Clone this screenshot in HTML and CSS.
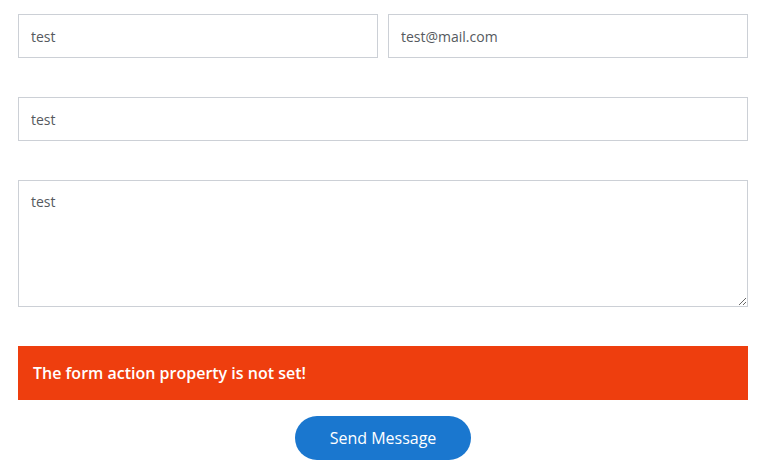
FILE: index.html
```html
<!DOCTYPE html>
<html>
<head>
<meta charset="utf-8">
<link rel="stylesheet" href="styles.css">
</head>
<body>
<form class="form">
  <div class="row two">
    <input class="field" type="text" value="test">
    <input class="field" type="email" value="test@mail.com">
  </div>
  <div class="row">
    <input class="field" type="text" value="test">
  </div>
  <div class="row">
    <textarea class="field area">test</textarea>
  </div>
  <div class="alert">The form action property is not set!</div>
  <div class="actions">
    <button class="btn" type="button">Send Message</button>
  </div>
</form>
</body>
</html>
```
FILE: styles.css
```css
html, body {
  margin: 0;
  padding: 0;
  background: #fff;
}
body {
  font-family: "Open Sans", "Liberation Sans", sans-serif;
}
.form {
  width: 730px;
  padding: 14px 0 0 18px;
  display: flex;
  flex-direction: column;
}
.row {
  display: flex;
  margin-bottom: 39px;
}
.row.two {
  gap: 10px;
}
.field {
  flex: 1;
  min-width: 0;
  box-sizing: border-box;
  height: 44px;
  border: 1px solid #ccd0d6;
  border-radius: 0;
  padding: 0 12px;
  font-family: "Open Sans", "Liberation Sans", sans-serif;
  font-size: 14px;
  color: #555a60;
  background: #fff;
  outline: none;
}
.area {
  height: 127px;
  padding: 12px 12px;
  line-height: 18px;
  resize: vertical;
}
.alert {
  box-sizing: border-box;
  height: 54px;
  background: #ee3e0e;
  color: #fff;
  font-weight: 600;
  font-size: 16px;
  padding: 0 15px;
  display: flex;
  align-items: center;
}
.actions {
  display: flex;
  justify-content: center;
  margin-top: 16px;
}
.btn {
  width: 176px;
  height: 44px;
  border: none;
  border-radius: 22px;
  background: #1a77cf;
  color: #fff;
  font-family: "Open Sans", "Liberation Sans", sans-serif;
  font-size: 16px;
  padding: 0;
  cursor: pointer;
}
```
